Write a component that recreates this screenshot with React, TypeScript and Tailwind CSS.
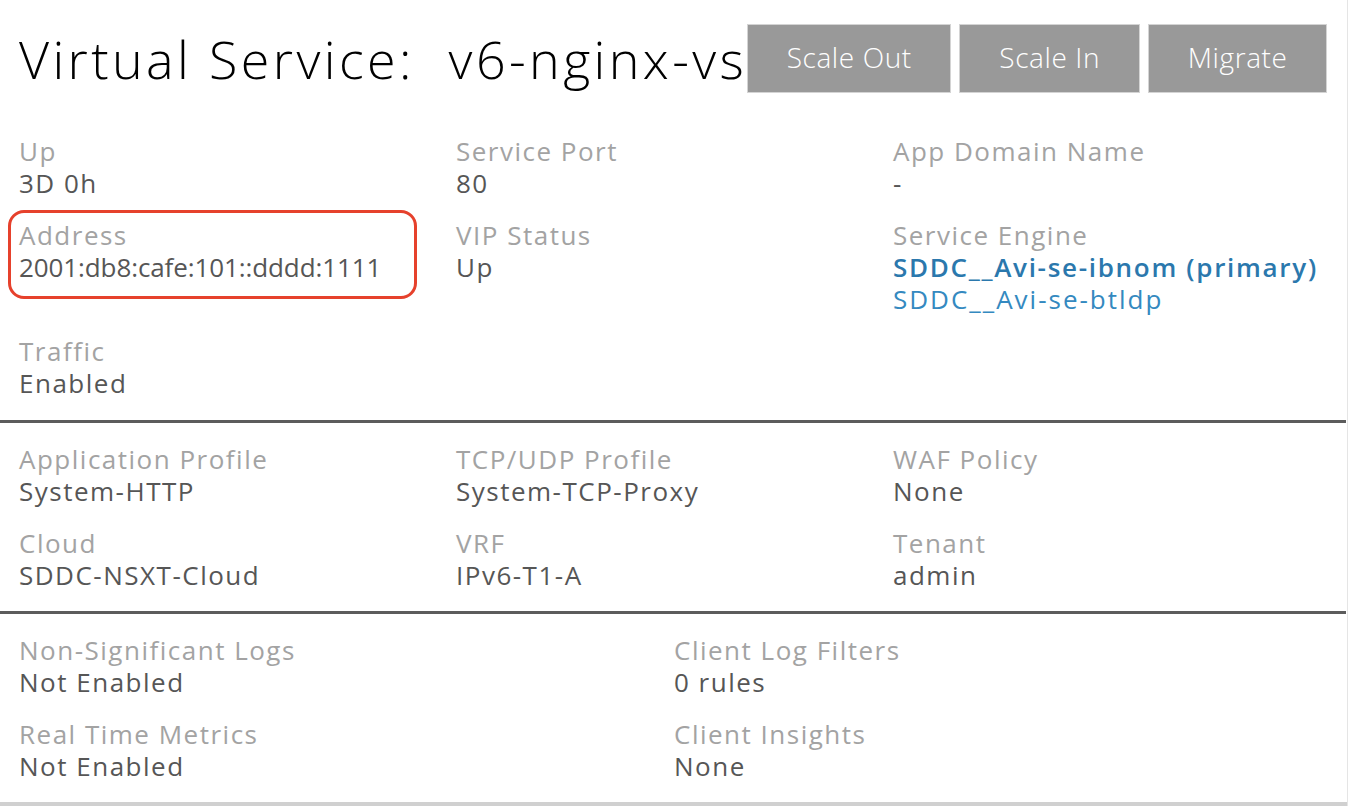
import React from 'react';

type Field = { label: string; values: React.ReactNode[] };

const font = { fontFamily: '"Open Sans", "Noto Sans", sans-serif' };

function Item({ label, values }: Field) {
  return (
    <div className="flex flex-col">
      <span className="text-[26px] leading-[32px] text-[#a3a3a3] tracking-[1.5px]">{label}</span>
      {values.map((v, i) => (
        <span key={i} className="text-[26px] leading-[32px] text-[#565656] tracking-[1.5px] whitespace-nowrap">
          {v}
        </span>
      ))}
    </div>
  );
}

export default function App() {
  return (
    <div className="w-[1348px] h-[806px] bg-white overflow-hidden flex flex-col border-r border-[#e5e5e5]" style={font}>
      {/* header */}
      <div className="flex items-start justify-between pl-[19px] pr-[20px] pt-[24px] h-[120px]">
        <h1 className="text-[52px] leading-[69px] font-light text-black whitespace-pre tracking-[3.4px]">
          Virtual Service:  v6-nginx-vs
        </h1>
        <div className="flex gap-[8px]">
          {['Scale Out', 'Scale In', 'Migrate'].map((b, i) => (
            <button
              key={b}
              className={`h-[69px] pb-[4px] bg-[#999999] border border-[#d4d4d4] text-white text-[28px] font-light tracking-[0.6px] ${
                i === 0 ? 'w-[204px]' : i === 1 ? 'w-[181px]' : 'w-[179px]'
              }`}
            >
              {b}
            </button>
          ))}
        </div>
      </div>

      {/* section 1 */}
      <div className="relative grid gap-y-[20px] pl-[19px] pt-[16px] pb-[21px] [grid-template-columns:437px_437px_1fr]">
        <Item label="Up" values={['3D 0h']} />
        <Item label="Service Port" values={['80']} />
        <Item label="App Domain Name" values={['-']} />
        <Item label="Address" values={[<span className="tracking-[-0.1px]">2001:db8:cafe:101::dddd:1111</span>]} />
        <Item label="VIP Status" values={['Up']} />
        <Item
          label="Service Engine"
          values={[
            <span className="font-semibold text-[#2b78ad] tracking-[1.7px]">SDDC__Avi-se-ibnom (primary)</span>,
            <span className="text-[#3489c0] tracking-[2px]">SDDC__Avi-se-btldp</span>,
          ]}
        />
        <Item label="Traffic" values={['Enabled']} />
        {/* highlight around the address */}
        <div className="absolute left-[8px] top-[91px] w-[409px] h-[89px] border-[3px] border-[#e6412c] rounded-[16px]" />
      </div>
      <div className="h-[3px] bg-[#5c5c5c] w-[1346px]" />

      {/* section 2 */}
      <div className="grid gap-y-[20px] pl-[19px] pt-[20px] pb-[20px] [grid-template-columns:437px_437px_1fr]">
        <Item label="Application Profile" values={['System-HTTP']} />
        <Item label="TCP/UDP Profile" values={['System-TCP-Proxy']} />
        <Item label="WAF Policy" values={['None']} />
        <Item label="Cloud" values={['SDDC-NSXT-Cloud']} />
        <Item label="VRF" values={['IPv6-T1-A']} />
        <Item label="Tenant" values={['admin']} />
      </div>
      <div className="h-[3px] bg-[#5c5c5c] w-[1346px]" />

      {/* section 3 */}
      <div className="grid gap-y-[20px] pl-[19px] pt-[20px] pb-[20px] [grid-template-columns:655px_1fr]">
        <Item label="Non-Significant Logs" values={['Not Enabled']} />
        <Item label="Client Log Filters" values={['0 rules']} />
        <Item label="Real Time Metrics" values={['Not Enabled']} />
        <Item label="Client Insights" values={['None']} />
      </div>
      <div className="mt-auto h-[4px] bg-[#d0d0d0]" />
    </div>
  );
}
